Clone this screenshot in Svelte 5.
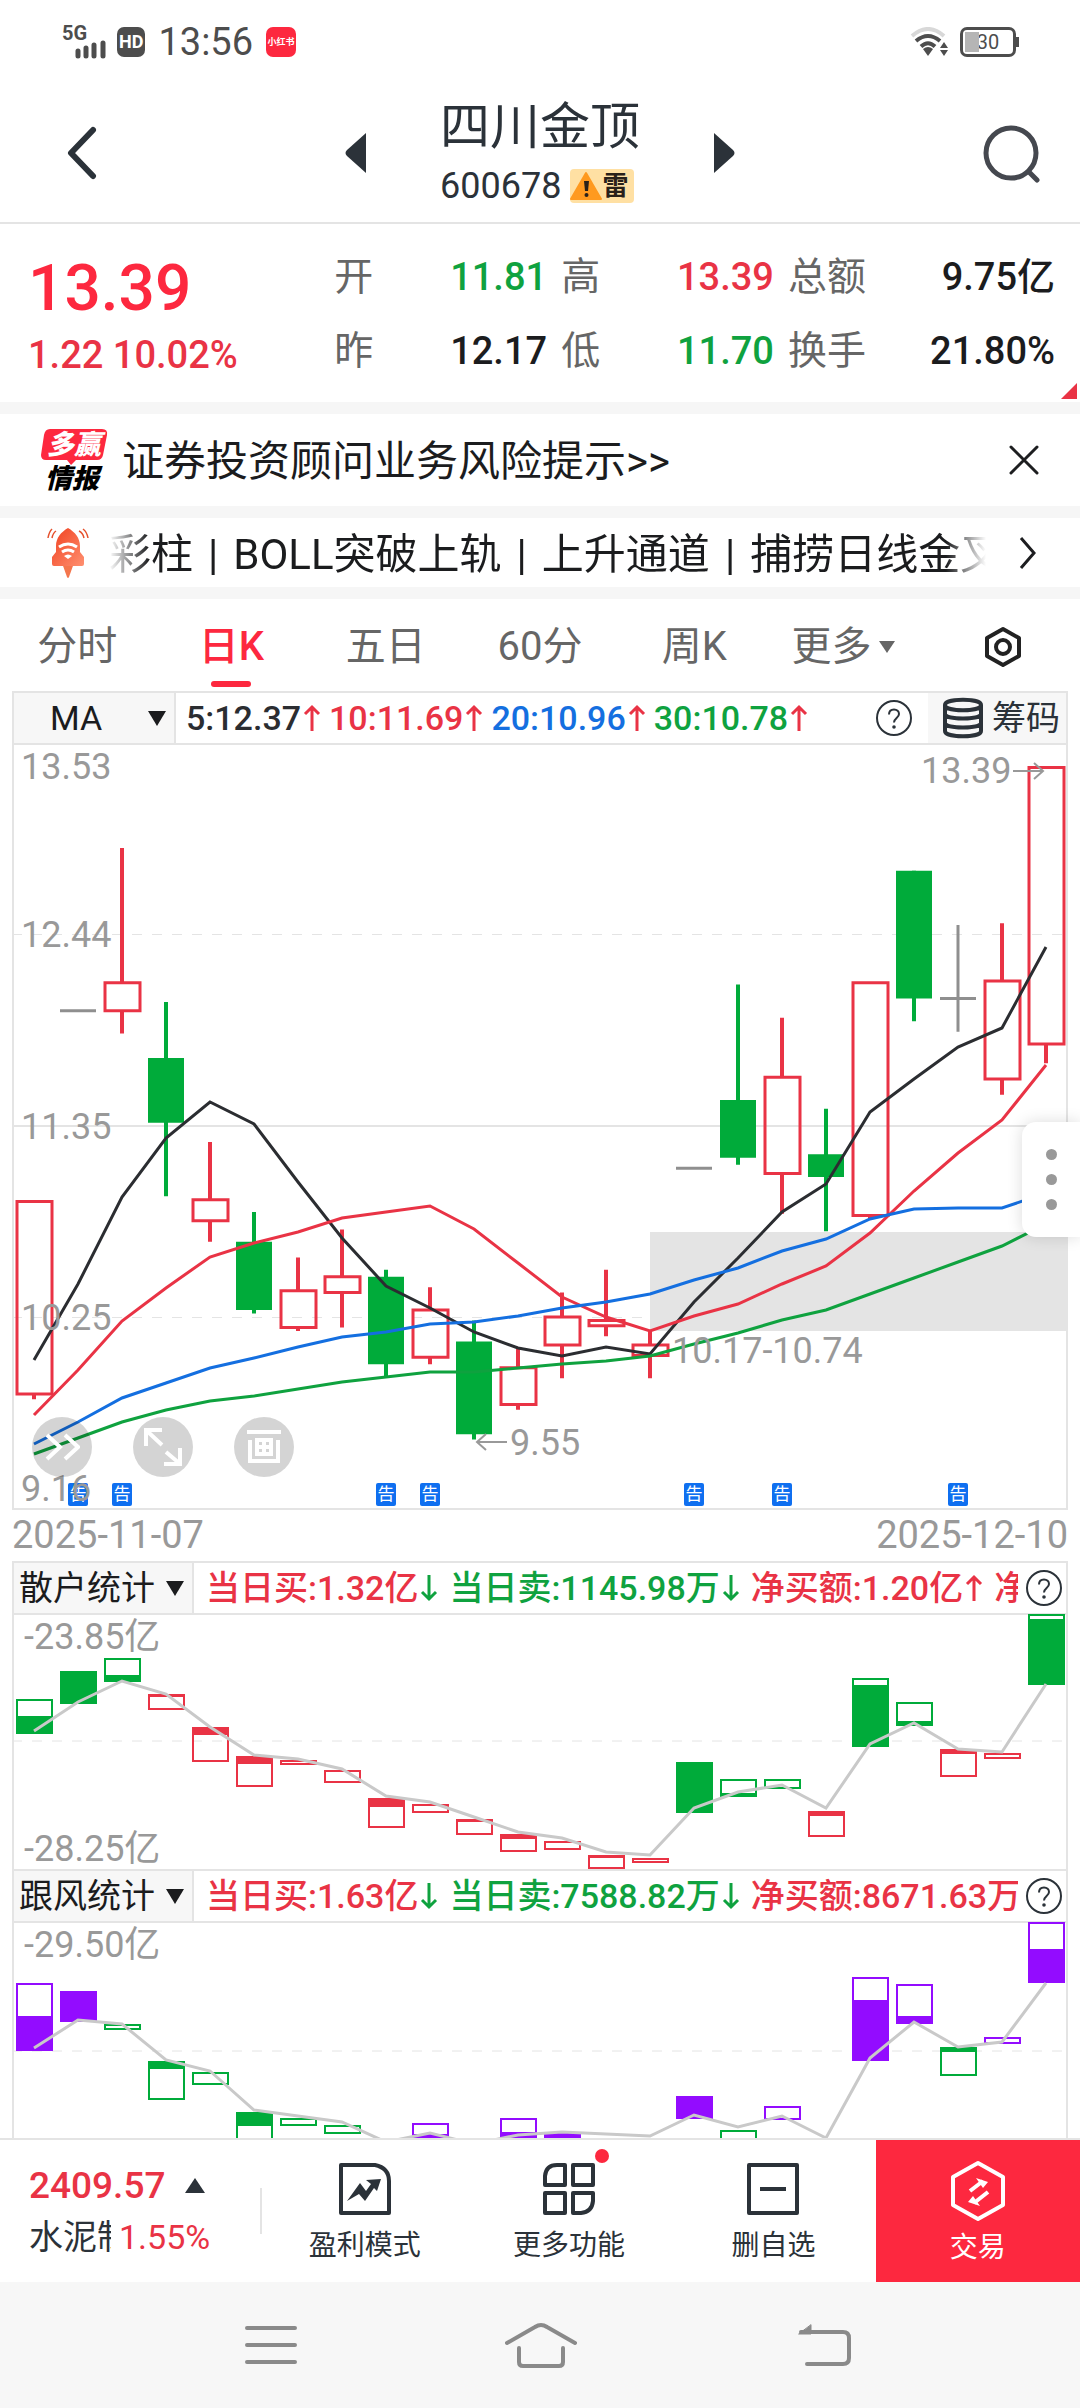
<script>
  const RED = '#e93345';
  const GREEN = '#00ab3a';
  const PURPLE = '#930cff';
  const BLUE = '#146fe0';

  const MAX_PRICE = 13.53;
  const PX_PER_YUAN = 175;
  const STEP = 44;

  const x = (i) => 22 + i * STEP;
  const y = (price) => (MAX_PRICE - price) * PX_PER_YUAN;

  // open, high, low, close
  const candles = [
    [9.81, 10.91, 9.78, 10.91],
    [12.0, 12.0, 12.0, 12.0],
    [12.0, 12.93, 11.87, 12.16],
    [11.73, 12.05, 10.94, 11.36],
    [10.8, 11.25, 10.68, 10.92],
    [10.68, 10.85, 10.27, 10.29],
    [10.19, 10.59, 10.17, 10.4],
    [10.39, 10.75, 10.19, 10.48],
    [10.48, 10.52, 9.91, 9.98],
    [10.02, 10.42, 9.98, 10.29],
    [10.11, 10.23, 9.55, 9.58],
    [9.75, 10.07, 9.72, 9.96],
    [10.09, 10.39, 9.9, 10.25],
    [10.2, 10.52, 10.14, 10.23],
    [10.03, 10.17, 9.9, 10.09],
    [11.1, 11.1, 11.1, 11.1],
    [11.49, 12.15, 11.12, 11.16],
    [11.07, 11.96, 10.84, 11.62],
    [11.18, 11.44, 10.74, 11.05],
    [10.83, 12.16, 10.81, 12.16],
    [12.8, 12.8, 11.94, 12.07],
    [12.07, 12.49, 11.88, 12.07],
    [11.61, 12.5, 11.52, 12.17],
    [11.81, 13.39, 11.7, 13.39]
  ];

  const averages = [
    { name: '5', value: '12.37', color: '#2b2d31', points: [617, 541, 454, 395, 359, 381, 439, 495, 543, 565, 589, 605, 613, 604, 611, 559, 515, 469, 441, 369, 336, 304, 285, 204] },
    { name: '10', value: '11.69', color: RED, points: [672, 627, 578, 545, 514, 500, 489, 475, 469, 463, 486, 520, 554, 574, 588, 573, 561, 541, 523, 490, 448, 410, 377, 322] },
    { name: '20', value: '10.96', color: BLUE, points: [701, 679, 655, 640, 625, 615, 604, 594, 589, 581, 579, 573, 565, 559, 551, 537, 525, 508, 496, 476, 466, 465, 465, 450] },
    { name: '30', value: '10.78', color: '#0fa23f', points: [711, 695, 679, 667, 658, 653, 646, 639, 634, 629, 629, 625, 621, 618, 613, 601, 590, 577, 567, 551, 535, 519, 503, 481] }
  ];

  const notices = [1, 2, 8, 9, 15, 17, 21];

  // column, color, top, bottom, fill top, fill bottom
  const retail = {
    bars: [
      [0, GREEN, 86, 121, 103, 121], [1, GREEN, 58, 91, 58, 91], [2, GREEN, 45, 69, 62, 69],
      [3, RED, 81, 97, 81, 84], [4, RED, 114, 149, 114, 122], [5, RED, 143, 174, 143, 151],
      [6, RED, 147, 152], [7, RED, 157, 170], [8, RED, 185, 215, 185, 194], [9, RED, 191, 200],
      [10, RED, 206, 222, 206, 209], [11, RED, 221, 239, 221, 226], [12, RED, 228, 237],
      [13, RED, 242, 256, 242, 245], [14, RED, 245, 250], [15, GREEN, 149, 200, 149, 200],
      [16, GREEN, 166, 184, 180, 184], [17, GREEN, 166, 176], [18, RED, 198, 224, 198, 203],
      [19, GREEN, 65, 134, 72, 134], [20, GREEN, 89, 113, 108, 113], [21, RED, 136, 164, 136, 141],
      [22, RED, 140, 146], [23, GREEN, 1, 72, 6, 72]
    ],
    line: [118, 89, 68, 81, 114, 142, 146, 156, 183, 189, 204, 219, 225, 239, 242, 195, 179, 172, 195, 131, 110, 136, 139, 71]
  };

  const follow = {
    bars: [
      [0, PURPLE, 62, 130, 95, 130], [1, PURPLE, 70, 101, 70, 101], [2, GREEN, 103, 109],
      [3, GREEN, 140, 179, 140, 148], [4, GREEN, 151, 164], [5, GREEN, 191, 240, 191, 205],
      [6, GREEN, 197, 205], [7, GREEN, 204, 213], [9, PURPLE, 202, 230, 213, 230],
      [11, PURPLE, 197, 230, 211, 230], [12, PURPLE, 212, 230, 212, 230], [15, PURPLE, 175, 198, 175, 198],
      [16, GREEN, 209, 230], [17, PURPLE, 185, 199], [19, PURPLE, 56, 140, 79, 140],
      [20, PURPLE, 63, 103, 95, 103], [21, GREEN, 126, 155, 126, 131], [22, PURPLE, 116, 123],
      [23, PURPLE, 1, 62, 28, 62]
    ],
    line: [127, 99, 103, 139, 150, 189, 195, 201, 221, 212, 223, 214, 211, 213, 215, 194, 206, 195, 217, 137, 101, 126, 121, 62]
  };

  const stats = [
    {
      name: '散户统计', max: '-23.85亿', min: '-28.25亿', height: 256, mid: 128, data: retail,
      values: [['当日买:', '1.32亿', 'red', 'down'], ['当日卖:', '1145.98万', 'green', 'down'], ['净买额:', '1.20亿', 'red', 'up'], ['净额:', '', 'red', '']]
    },
    {
      name: '跟风统计', max: '-29.50亿', min: '', height: 217, mid: 130, data: follow,
      values: [['当日买:', '1.63亿', 'red', 'down'], ['当日卖:', '7588.82万', 'green', 'down'], ['净买额:', '8671.63万', 'red', '']]
    }
  ];

  const quotes = [
    ['开', '11.81', 'green'], ['高', '13.39', 'red'], ['总额', '9.75亿', ''],
    ['昨', '12.17', ''], ['低', '11.70', 'green'], ['换手', '21.80%', '']
  ];

  const periods = ['分时', '日K', '五日', '60分', '周K'];
  let period = $state('日K');
  let noticeOpen = $state(true);

  const signals = ['彩柱', 'BOLL突破上轨', '上升通道', '捕捞日线金叉'];

  const toPoints = (values) => values.map((v, i) => `${x(i)},${v}`).join(' ');
</script>

{#snippet arrow(dir)}
  <svg class="arrow {dir}" viewBox="0 0 18 28" width="18" height="28" aria-hidden="true">
    {#if dir === 'up'}
      <path d="M9 27V3M2 10l7-7 7 7" />
    {:else}
      <path d="M9 1v24M2 18l7 7 7-7" />
    {/if}
  </svg>
{/snippet}

{#snippet help()}
  <button class="help" aria-label="说明">
    <svg viewBox="0 0 38 38" width="38" height="38">
      <circle cx="19" cy="19" r="17" />
      <path d="M14 15.500c0-3 2-5 5-5s5 2 5 4.500c0 4-5 4-5 8.500" />
      <circle class="dot" cx="19" cy="28" r="1.800" />
    </svg>
  </button>
{/snippet}

<div class="app">
  <div class="status">
    <div class="status-side">
      <svg viewBox="0 0 50 34" width="50" height="34">
        <text x="0" y="15" class="net">5G</text>
        <path d="M16 31v-5M24 31v-8M32 31v-11M41 31V18" stroke="#4d4d4d" stroke-width="5" stroke-linecap="round" />
      </svg>
      <span class="hd">HD</span>
      <span class="time">13:56</span>
      <span class="red-app">小红书</span>
    </div>
    <div class="status-side right">
      <svg viewBox="0 0 40 30" width="40" height="30" fill="none" stroke-width="4">
        <path d="M2 9Q18-5 34 9" stroke="#d8d8d8" />
        <path d="M6 14Q18 4 30 14M11 19.500Q18 13 25 19.500" stroke="#4d4d4d" />
        <path d="M13 22q5-4 10 0l-5 7z" fill="#4d4d4d" />
        <path d="M34 15l4 6h-8zM34 29l4-6h-8z" fill="#4d4d4d" />
      </svg>
      <span class="battery"><i></i>30</span>
    </div>
  </div>

  <header>
    <button class="icon" aria-label="返回">
      <svg viewBox="0 0 32 54" width="32" height="54"><path d="M27 4L5 27l22 23" fill="none" stroke="#2b3239" stroke-width="6" stroke-linecap="round" stroke-linejoin="round" /></svg>
    </button>
    <div class="switcher">
      <button class="icon" aria-label="上一只">
        <svg viewBox="0 0 22 40" width="22" height="40"><path d="M21 0v40L2 23q-3-3 0-6z" fill="#2b3239" /></svg>
      </button>
      <div class="stock">
        <h1>四川金顶</h1>
        <div class="code">
          600678
          <span class="risk">
            <svg viewBox="0 0 32 30" width="32" height="30">
              <path d="M16 2L31 28H1z" fill="#ff9a1f" stroke="#ff9a1f" stroke-width="2" stroke-linejoin="round" />
              <path d="M14 10h5l-1 10h-3z" fill="#29211a" /><circle cx="16.500" cy="24" r="2" fill="#29211a" />
            </svg>雷
          </span>
        </div>
      </div>
      <button class="icon" aria-label="下一只">
        <svg viewBox="0 0 22 40" width="22" height="40"><path d="M1 0v40l19-17q3-3 0-6z" fill="#2b3239" /></svg>
      </button>
    </div>
    <button class="icon" aria-label="搜索">
      <svg viewBox="0 0 60 60" width="60" height="60" fill="none" stroke="#45484f" stroke-width="5">
        <circle cx="29" cy="30" r="25" /><path d="M47 49l8 8" stroke-linecap="round" />
      </svg>
    </button>
  </header>

  <section class="quote">
    <div class="last">
      <strong>13.39</strong>
      <span>1.22 10.02%</span>
    </div>
    <dl>
      {#each quotes as [label, value, tone]}
        <div>
          <dt>{label}</dt>
          <dd class={tone}>{value}</dd>
        </div>
      {/each}
    </dl>
  </section>

  {#if noticeOpen}
    <section class="notice">
      <div class="logo">
        <svg viewBox="0 0 70 66" width="70" height="66">
          <path d="M10 2h52q6 0 5 6l-4 20q-1 5-6 5H36l-5 5-4-5H6q-5 0-5-5L4 8q1-6 6-6z" fill="#fd283f" />
          <text x="34" y="27" class="logo-top">多赢</text>
          <text x="32" y="61" class="logo-bottom">情报</text>
        </svg>
      </div>
      <a href="#risk">证券投资顾问业务风险提示&gt;&gt;</a>
      <button class="icon" aria-label="关闭" onclick={() => (noticeOpen = false)}>
        <svg viewBox="0 0 32 32" width="32" height="32"><path d="M3 3l26 26M29 3L3 29" stroke="#1d1e20" stroke-width="3" stroke-linecap="round" /></svg>
      </button>
    </section>
  {/if}

  <section class="signals">
    <svg class="rocket" viewBox="0 0 42 52" width="42" height="52" fill="none">
      <defs>
        <linearGradient id="body" x1="0" y1="0" x2="1" y2="1">
          <stop offset="0" stop-color="#f0401f" /><stop offset="1" stop-color="#ff9070" />
        </linearGradient>
      </defs>
      <path d="M15 36h12l-5 14q-1 2-2 0z" fill="#f4764d" />
      <path d="M21 1c7 4 12 10 12 18v6l4 5v7q0 2-2 2H7q-2 0-2-2v-7l4-5v-6C9 11 14 5 21 1z" fill="url(#body)" />
      <path d="M12 20q9-6 18 0M15 25q6-4 12 0" stroke="#fff" stroke-width="3" />
      <path d="M17 29q4-3 8 0l-4 3z" fill="#fff" />
      <path d="M5 2Q2 5 1 11M9 4Q6 6 5 11M36 2q4 3 5 9M32 4q4 2 5 7" stroke="#e5512d" stroke-width="1.500" />
    </svg>
    <div class="ticker">
      {#each signals as signal, i}
        {#if i > 0}<i>|</i>{/if}<span>{signal}</span>
      {/each}
    </div>
    <button class="icon" aria-label="更多信号">
      <svg viewBox="0 0 20 36" width="20" height="36"><path d="M3 3l13 15L3 33" fill="none" stroke="#1d1e20" stroke-width="3" /></svg>
    </button>
  </section>

  <nav class="periods">
    {#each periods as p}
      <button class:active={period === p} onclick={() => (period = p)}>{p}</button>
    {/each}
    <button class="more">更多<svg viewBox="0 0 18 14" width="18" height="14"><path d="M1 1h16L9 13z" fill="#666" /></svg></button>
    <button aria-label="设置">
      <svg viewBox="0 0 38 42" width="38" height="42" fill="none" stroke="#222" stroke-width="4">
        <path d="M19 3l16 9v18l-16 9-16-9V12z" stroke-linejoin="round" /><circle cx="19" cy="21" r="7" />
      </svg>
    </button>
  </nav>

  <main>
    <div class="bar">
      <label class="picker ma">
        <select aria-label="主图指标"><option>MA</option></select>
        <svg viewBox="0 0 18 15" width="18" height="15"><path d="M0 0h18L9 15z" fill="#1b1c1e" /></svg>
      </label>
      <div class="values averages">
        {#each averages as ma}
          <span style:color={ma.color}>{ma.name}:{ma.value}{@render arrow('up')}</span>
        {/each}
      </div>
      {@render help()}
      <button class="chips">
        <svg viewBox="0 0 42 42" width="42" height="42" fill="none" stroke="#2b3239" stroke-width="4">
          <path d="M3 8c0-7 36-7 36 0s-36 7-36 0v26c0 7 36 7 36 0V8M3 17c0 6 36 6 36 0M3 26c0 6 36 6 36 0" />
        </svg>筹码
      </button>
    </div>

    <div class="chart">
      <svg viewBox="0 0 1056 765">
        <path class="dash" d="M0 191.500H1056M0 574.500H1056" />
        <path class="rule" d="M0 383H1056" />
        <rect x="638" y="489" width="418" height="99" fill="#e4e4e4" />
        {#each candles as [open, high, low, close], i}
          {#if open === close}
            <path d="M{x(i) - 18} {y(close)}h36M{x(i)} {y(high)}V{y(low)}" stroke="#8f8f8f" stroke-width="3" />
          {:else if close > open}
            <path d="M{x(i)} {y(high)}V{y(close)}M{x(i)} {y(open)}V{y(low)}" stroke={RED} stroke-width="4" />
            <rect x={x(i) - 17} y={y(close)} width="35" height={y(open) - y(close)} fill="none" stroke={RED} stroke-width="3" />
          {:else}
            <path d="M{x(i)} {y(high)}V{y(low)}" stroke={GREEN} stroke-width="4" />
            <rect x={x(i) - 18} y={y(open)} width="36" height={y(close) - y(open)} fill={GREEN} />
          {/if}
        {/each}
        {#each averages as ma}
          <polyline points={toPoints(ma.points)} fill="none" stroke={ma.color} stroke-width="3" />
        {/each}
        {#each notices as i}
          <rect x={x(i) - 10} y="740" width="20" height="23" rx="2" fill="#0f6ff0" />
          <text class="mark" x={x(i)} y="757">告</text>
        {/each}
        <g class="labels">
          <text x="9" y="36">13.53</text>
          <text x="9" y="204">12.44</text>
          <text x="9" y="396">11.35</text>
          <text x="9" y="587">10.25</text>
          <text x="9" y="758">9.16</text>
          <text x="909" y="40">13.39</text>
          <text x="498" y="712">9.55</text>
          <text x="660" y="620">10.17-10.74</text>
          <path d="M1001 28h30M1022 20l9 8-9 8M495 699h-30M474 691l-9 8 9 8" fill="none" stroke="#999" stroke-width="2" />
        </g>
      </svg>
      <div class="tools">
        <button aria-label="展开">
          <svg viewBox="0 0 36 28" width="36" height="28"><path d="M3 2l13 12L3 26M21 2l13 12-13 12" /></svg>
        </button>
        <button aria-label="全屏">
          <svg viewBox="0 0 40 40" width="40" height="40"><path d="M3 19V3h16M4 4l15 14M37 21v16H21M36 36L23 25" /></svg>
        </button>
        <button aria-label="画线">
          <svg viewBox="0 0 36 36" width="36" height="36"><path d="M1 3h34M4 11v21h28V11M11 11h14v14H11zM18 11v14M11 18h14" /></svg>
        </button>
      </div>
      <button class="side" aria-label="侧栏"><i></i><i></i><i></i></button>
    </div>

    <div class="dates"><time>2025-11-07</time><time>2025-12-10</time></div>

    {#each stats as stat}
      <div class="bar">
        <label class="picker">
          <select aria-label="副图指标"><option>{stat.name}</option></select>
          <svg viewBox="0 0 18 15" width="18" height="15"><path d="M0 0h18L9 15z" fill="#1b1c1e" /></svg>
        </label>
        <div class="values">
          {#each stat.values as [label, value, tone, dir]}
            <span class={tone}>{label}{value}{#if dir}{@render arrow(dir)}{/if}</span>
          {/each}
        </div>
        {@render help()}
      </div>
      <div class="chart">
        <svg viewBox="0 0 1056 {stat.height}">
          <path class="dash" d="M0 {stat.mid}H1056" />
          {#each stat.data.bars as [i, color, top, bottom, from, to]}
            <rect x={x(i) - 17} y={top + 1} width="35" height={bottom - top - 2} fill="none" stroke={color} stroke-width="2" />
            {#if to}
              <rect x={x(i) - 18} y={from} width="37" height={to - from} fill={color} />
            {/if}
          {/each}
          <polyline points={toPoints(stat.data.line)} fill="none" stroke="#c9c9c9" stroke-width="3" />
          <g class="labels">
            <text x="12" y="36">{stat.max}</text>
            <text x="12" y={stat.height - 8}>{stat.min}</text>
          </g>
        </svg>
      </div>
    {/each}
  </main>

  <footer>
    <div class="index">
      <div><b>2409.57</b><svg viewBox="0 0 20 15" width="20" height="15"><path d="M10 0l10 15H0z" fill="#2b3239" /></svg></div>
      <div><span>水泥制造</span><em>1.55%</em></div>
    </div>
    <button>
      <svg viewBox="0 0 54 54" width="54" height="54" fill="none" stroke="#2b3239" stroke-width="4" stroke-linejoin="round">
        <path d="M3 3h34q14 3 14 16v32H3z" /><path d="M9 39l13-18 6 8 5-7-5-4 15-1-4 12-3-3-9 13-6-7z" fill="#2b3239" stroke="none" />
      </svg>
      盈利模式
    </button>
    <button>
      <svg viewBox="0 0 54 54" width="54" height="54" fill="none" stroke="#2b3239" stroke-width="4" stroke-linejoin="round">
        <path d="M23 3v20H3v-9Q4 3 15 3zM31 3h20v20H31zM3 31h20v20H3zM31 31h20v8q-1 11-12 12h-8z" />
      </svg>
      <i class="badge"></i>
      更多功能
    </button>
    <button>
      <svg viewBox="0 0 54 54" width="54" height="54" fill="none" stroke="#2b3239" stroke-width="4" stroke-linejoin="round">
        <path d="M3 3h48v48H3zM14 27h26" />
      </svg>
      删自选
    </button>
    <button class="trade">
      <svg viewBox="0 0 56 62" width="56" height="62" fill="none" stroke="#fff" stroke-width="4" stroke-linejoin="round">
        <path d="M28 3l25 14v28L28 59 3 45V17z" />
        <path d="M20 31l13-10M38 32L24 43" />
        <path d="M26 18l12 4-5 6zM30 46l-12-4 5-6z" fill="#fff" stroke="none" />
      </svg>
      交易
    </button>
  </footer>

  <div class="system">
    <button aria-label="最近任务"><svg viewBox="0 0 52 42" width="52" height="42"><path d="M2 4h48M2 21h48M2 38h48" /></svg></button>
    <button aria-label="主页"><svg viewBox="0 0 72 46" width="72" height="46"><path d="M2 21L30 5q6-4 12 0l28 16M14 26v14q0 4 4 4h36q4 0 4-4V26" /></svg></button>
    <button aria-label="返回键"><svg viewBox="0 0 54 44" width="54" height="44"><path d="M4 9h42q6 0 6 6v20q0 6-6 6H10" /><path d="M14 2v9H2z" fill="#8a8a8a" stroke-width="1" /></svg></button>
  </div>
</div>

<style>
  :global(body) {
    margin: 0;
    background: #f7f7f7;
  }

  .app {
    background: #fff;
    color: #1b1c1e;
    font-family: Roboto, "Noto Sans CJK SC", sans-serif;
    font-size: 40px;
    line-height: 1;
    overflow: hidden;
  }

  button {
    padding: 0;
    border: 0;
    background: none;
    color: inherit;
    font: inherit;
    cursor: pointer;
  }

  svg {
    display: block;
  }

  .red {
    color: #e93345;
  }

  .green {
    color: #0fa23f;
  }

  .icon {
    display: flex;
    flex: none;
  }

  /* status bar */
  .status {
    display: flex;
    justify-content: space-between;
    align-items: center;
    height: 84px;
    padding: 0 64px 0 62px;
    color: #4d4d4d;
  }

  .status-side {
    display: flex;
    align-items: center;
    gap: 5px;
  }

  .status-side.right {
    gap: 10px;
  }

  .net {
    font-size: 20px;
    font-weight: 700;
    fill: #4d4d4d;
  }

  .hd {
    padding: 6px 2px;
    border-radius: 7px;
    background: #4d4d4d;
    color: #fff;
    font-size: 18px;
    font-weight: 700;
  }

  .time {
    padding: 0 8px;
    font-size: 38px;
  }

  .red-app {
    width: 30px;
    border-radius: 7px;
    background: #fd283f;
    color: #fff;
    font-size: 9px;
    font-weight: 700;
    line-height: 30px;
    text-align: center;
  }

  .battery {
    position: relative;
    width: 50px;
    border: 3px solid #4d4d4d;
    border-radius: 7px;
    font-size: 20px;
    line-height: 24px;
    text-align: center;
  }

  .battery i {
    position: absolute;
    inset: 2px auto 2px 2px;
    width: 14px;
    background: #b5b5b5;
  }

  .battery::after {
    content: "";
    position: absolute;
    top: 7px;
    right: -6px;
    width: 3px;
    height: 10px;
    background: #4d4d4d;
  }

  /* title */
  header {
    display: flex;
    justify-content: space-between;
    align-items: center;
    height: 138px;
    padding: 0 38px 0 66px;
    border-bottom: 2px solid #e4e4e4;
    color: #2b3239;
  }

  .switcher {
    display: flex;
    justify-content: space-between;
    align-items: center;
    width: 390px;
  }

  h1 {
    margin: 0;
    font-size: 50px;
    font-weight: 400;
    line-height: 70px;
  }

  .code {
    display: flex;
    align-items: center;
    gap: 9px;
    padding-bottom: 4px;
    font-size: 36px;
    line-height: 48px;
  }

  .risk {
    display: flex;
    align-items: center;
    height: 34px;
    padding-right: 6px;
    border-radius: 4px;
    background: #ffe0a3;
    color: #29211a;
    font-size: 26px;
    font-weight: 700;
  }

  /* quote */
  .quote {
    display: flex;
    position: relative;
    height: 178px;
    padding: 0 25px 0 28px;
    border-bottom: 12px solid #f6f6f6;
  }

  .quote::after {
    content: "";
    position: absolute;
    right: 3px;
    bottom: 3px;
    border: 8px solid #e93345;
    border-top-color: transparent;
    border-left-color: transparent;
  }

  .last {
    display: flex;
    flex: 306 1 0;
    flex-direction: column;
    padding-top: 31px;
    color: #fd283f;
  }

  .last strong {
    font-size: 64px;
    font-weight: 500;
    line-height: 68px;
  }

  .last span {
    color: #e93345;
    font-size: 38px;
    font-weight: 500;
    line-height: 64px;
  }

  dl {
    display: grid;
    flex: 720 1 0;
    grid-template-columns: 212fr 212fr 266fr;
    grid-auto-rows: 74px;
    column-gap: 14px;
    margin: 0;
    padding-top: 16px;
  }

  dl div {
    display: flex;
    justify-content: space-between;
    align-items: center;
  }

  dt {
    color: #666;
    font-size: 39px;
  }

  dd {
    margin: 0;
    font-size: 38px;
    font-weight: 500;
  }

  /* notice and signals */
  .notice,
  .signals {
    display: flex;
    align-items: center;
    border-bottom: 12px solid #f6f6f6;
    font-size: 42px;
  }

  .notice {
    height: 92px;
    padding: 0 40px;
  }

  .notice a {
    flex: 1;
    margin-left: 12px;
    padding-top: 4px;
    color: inherit;
    text-decoration: none;
    white-space: nowrap;
  }

  .logo-top,
  .logo-bottom {
    font-size: 27px;
    font-style: italic;
    font-weight: 900;
    text-anchor: middle;
  }

  .logo-top {
    fill: #fff;
  }

  .signals {
    height: 69px;
    padding: 0 42px 0 47px;
  }

  .ticker {
    display: flex;
    flex: 1;
    min-width: 0;
    margin: 4px 32px 0 20px;
    overflow: hidden;
    line-height: 60px;
    white-space: nowrap;
    -webkit-mask-image: linear-gradient(90deg, transparent, #000 40px, #000 calc(100% - 40px), transparent);
    mask-image: linear-gradient(90deg, transparent, #000 40px, #000 calc(100% - 40px), transparent);
  }

  .ticker i {
    margin: 0 15px;
    font-style: normal;
  }

  /* periods */
  .periods {
    display: grid;
    grid-template-columns: repeat(7, 1fr);
    height: 92px;
  }

  .periods button {
    display: flex;
    position: relative;
    justify-content: center;
    align-items: center;
    padding-top: 4px;
    color: #666;
    font-size: 40px;
  }

  .periods .more {
    gap: 6px;
    padding-right: 10px;
  }

  .periods .active {
    color: #fd283f;
    font-weight: 500;
  }

  .periods .active::after {
    content: "";
    position: absolute;
    bottom: 4px;
    width: 40px;
    height: 6px;
    border-radius: 3px;
    background: #fd283f;
  }

  /* charts */
  main {
    padding: 0 12px;
  }

  .bar {
    display: flex;
    align-items: center;
    box-sizing: border-box;
    height: 52px;
    border: 2px solid #e4e4e4;
    border-bottom: 0;
    font-size: 34px;
  }

  .picker {
    display: flex;
    position: relative;
    flex: none;
    align-items: center;
    align-self: stretch;
    width: 178px;
    border-right: 2px solid #e4e4e4;
    background: #f7f7f7;
  }

  .picker.ma {
    width: 160px;
  }

  .picker select {
    appearance: none;
    width: 100%;
    height: 100%;
    padding: 0 0 0 5px;
    border: 0;
    background: none;
    color: inherit;
    font: inherit;
  }

  .picker.ma select {
    padding-left: 36px;
  }

  .picker svg {
    position: absolute;
    right: 8px;
    pointer-events: none;
  }

  .values {
    display: flex;
    flex: 1;
    gap: 11px;
    min-width: 0;
    margin-left: 12px;
    overflow: hidden;
    font-weight: 500;
    line-height: 50px;
    white-space: nowrap;
  }

  .values.averages {
    gap: 8px;
    margin-left: 10px;
  }

  .values span {
    display: flex;
    flex: none;
    align-items: center;
  }

  .arrow {
    margin-left: 2px;
    fill: none;
    stroke: #e93345;
    stroke-width: 3;
  }

  .arrow.down {
    stroke: #0fa23f;
  }

  .help {
    flex: none;
    margin: 0 3px 0 7px;
  }

  .help svg {
    fill: none;
    stroke: #2b3239;
    stroke-width: 2;
  }

  .help .dot {
    fill: #2b3239;
    stroke: none;
  }

  .chips {
    display: flex;
    align-items: center;
    align-self: stretch;
    gap: 8px;
    margin-left: 12px;
    padding: 0 6px 0 14px;
    background: #f7f7f7;
    color: #2b3239;
  }

  .chart {
    position: relative;
    box-shadow: inset 2px 0 #e4e4e4, inset -2px 0 #e4e4e4, inset 0 2px #e4e4e4;
  }

  .chart > svg {
    width: 100%;
    height: auto;
  }

  .dash,
  .rule {
    fill: none;
    stroke: #e4e4e4;
    stroke-width: 2;
  }

  .dash {
    stroke-width: 1;
    stroke-dasharray: 10 10;
  }

  .labels {
    fill: #999;
    font-size: 36px;
  }

  .mark {
    fill: #fff;
    font-size: 17px;
    text-anchor: middle;
  }

  .tools {
    display: flex;
    position: absolute;
    bottom: 31px;
    left: 20px;
    gap: 41px;
  }

  .tools button {
    display: flex;
    justify-content: center;
    align-items: center;
    width: 60px;
    height: 60px;
    border-radius: 50%;
    background: rgba(0, 0, 0, 0.17);
  }

  .tools svg {
    fill: none;
    stroke: #fff;
    stroke-width: 4;
  }

  .side {
    display: flex;
    position: absolute;
    top: 379px;
    right: -12px;
    flex-direction: column;
    justify-content: center;
    align-items: center;
    gap: 14px;
    width: 58px;
    height: 115px;
    border-radius: 14px 0 0 14px;
    background: #fff;
    box-shadow: 0 0 16px rgba(0, 0, 0, 0.14);
  }

  .side i {
    width: 11px;
    height: 11px;
    border-radius: 50%;
    background: #999;
  }

  .dates {
    display: flex;
    justify-content: space-between;
    border-top: 2px solid #e4e4e4;
    color: #999;
    font-size: 38px;
    line-height: 51px;
  }

  /* bottom */
  footer {
    display: grid;
    position: relative;
    grid-template-columns: 262fr repeat(4, 204fr);
    height: 142px;
    border-top: 2px solid #e4e4e4;
    background: #fff;
    color: #2b3239;
  }

  footer button {
    display: flex;
    position: relative;
    flex-direction: column;
    justify-content: center;
    align-items: center;
    gap: 16px;
    font-size: 28px;
  }

  .badge {
    position: absolute;
    top: 9px;
    left: calc(50% + 26px);
    width: 14px;
    height: 14px;
    border-radius: 50%;
    background: #fd283f;
  }

  footer .trade {
    gap: 12px;
    background: #fd283f;
    color: #fff;
  }

  .index {
    display: flex;
    position: relative;
    flex-direction: column;
    justify-content: center;
    gap: 12px;
    padding-left: 29px;
  }

  .index::after {
    content: "";
    position: absolute;
    top: 48px;
    right: 0;
    width: 2px;
    height: 46px;
    background: #e4e4e4;
  }

  .index div {
    display: flex;
    align-items: center;
    height: 40px;
  }

  .index b {
    margin-right: 20px;
    color: #e93345;
    font-size: 37px;
    font-weight: 500;
  }

  .index span {
    width: 82px;
    margin-right: 8px;
    overflow: hidden;
    font-size: 34px;
    line-height: 40px;
    white-space: nowrap;
  }

  .index em {
    color: #e93345;
    font-size: 34px;
    font-style: normal;
  }

  .system {
    display: grid;
    grid-template-columns: 270fr 270fr 296fr;
    height: 126px;
    padding: 0 108px 0 136px;
    background: #f7f7f7;
  }

  .system button {
    display: flex;
    justify-content: center;
    align-items: center;
  }

  .system svg {
    fill: none;
    stroke: #8a8a8a;
    stroke-width: 4;
    stroke-linecap: round;
    stroke-linejoin: round;
  }
</style>
